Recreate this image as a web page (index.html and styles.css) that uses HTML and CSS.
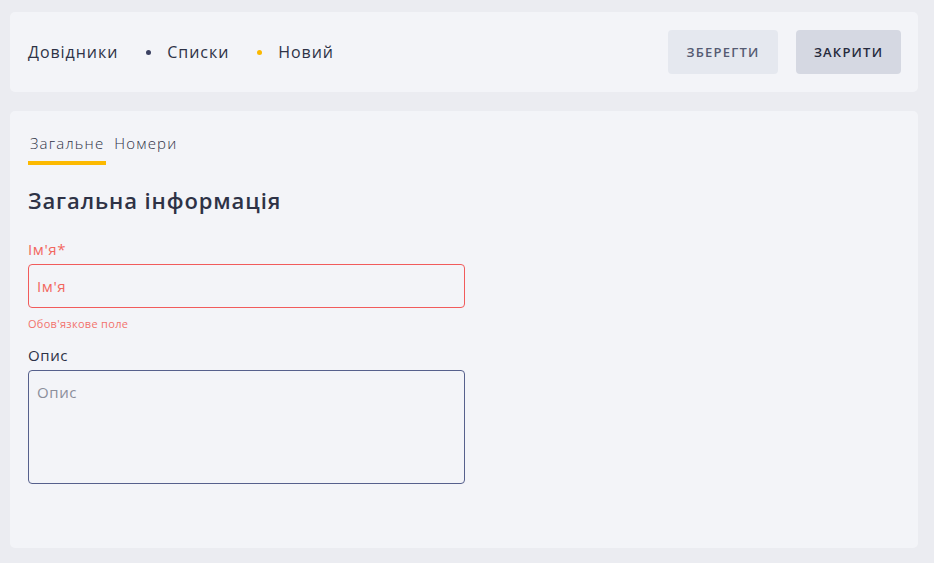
FILE: index.html
```html
<!DOCTYPE html>
<html lang="uk">
<head>
<meta charset="utf-8">
<title>Новий</title>
<link rel="stylesheet" href="styles.css">
</head>
<body>
<div class="page">
  <header class="topbar">
    <nav class="crumbs">
      <span class="crumb">Довідники</span>
      <span class="dot dot-dark"></span>
      <span class="crumb">Списки</span>
      <span class="dot dot-yellow"></span>
      <span class="crumb">Новий</span>
    </nav>
    <div class="actions">
      <button class="btn btn-save">ЗБЕРЕГТИ</button>
      <button class="btn btn-close">ЗАКРИТИ</button>
    </div>
  </header>
  <main class="card">
    <div class="tabs">
      <span class="tab active">Загальне</span>
      <span class="tab">Номери</span>
    </div>
    <h1 class="title">Загальна інформація</h1>
    <div class="field">
      <label class="label label-error">Ім'я*</label>
      <div class="input input-error"><span class="ph ph-error">Ім'я</span></div>
      <div class="error">Обов'язкове поле</div>
    </div>
    <div class="field">
      <label class="label">Опис</label>
      <div class="textarea"><span class="ph">Опис</span></div>
    </div>
  </main>
</div>
</body>
</html>
```
FILE: styles.css
```css
* { box-sizing: border-box; }
html, body { margin: 0; padding: 0; }
body {
  background: #ebecf1;
  font-family: "Open Sans", "DejaVu Sans", sans-serif;
  color: #2e3246;
  width: 934px;
  height: 563px;
  overflow: hidden;
}
.page {
  padding: 12px 16px 0 10px;
  display: flex;
  flex-direction: column;
  gap: 19px;
}
.topbar {
  background: #f3f4f8;
  border-radius: 5px;
  height: 80px;
  display: flex;
  align-items: center;
  justify-content: space-between;
  padding: 0 17px 0 18px;
}
.crumbs {
  display: flex;
  align-items: center;
  font-size: 16px;
  letter-spacing: 0.95px;
  color: #2e3246;
}
.dot {
  width: 5px;
  height: 5px;
  border-radius: 50%;
  margin: 0 16px 0 28px;
}
.dot-dark { background: #3b4162; }
.dot-yellow { background: #fbb800; }
.actions { display: flex; gap: 18px; }
.btn {
  height: 44px;
  border: none;
  border-radius: 4px;
  font-family: inherit;
  font-size: 13px;
  font-weight: 600;
  letter-spacing: 1.2px;
  padding: 0;
}
.btn-save { width: 110px; background: #e5e8ef; color: #555b72; }
.btn-close { width: 105px; background: #d5d8e2; color: #262a3c; }
.card {
  background: #f3f4f8;
  border-radius: 5px;
  height: 437px;
  padding: 22px 18px 0 18px;
}
.tabs {
  display: flex;
  gap: 6px;
  font-size: 15px;
  font-weight: 300;
  letter-spacing: 1.2px;
  color: #2e3246;
}
.tab { padding: 0 2px 8px 2px; border-bottom: 4px solid transparent; }
.tab.active { border-bottom-color: #fcb900; }
.title {
  margin: 20px 0 24px 0;
  font-size: 22px;
  font-weight: 600;
  letter-spacing: 0.9px;
  color: #2e3246;
}
.field { width: 437px; display: flex; flex-direction: column; }
.label { font-size: 15px; letter-spacing: 0.6px; color: #2e3246; margin-bottom: 5px; }
.label-error { color: #f2675f; }
.input {
  height: 44px;
  border: 1px solid #f15b5b;
  border-radius: 4px;
  padding: 0 8px;
  display: flex;
  align-items: center;
}
.ph { font-size: 15px; letter-spacing: 0.6px; color: #8b8e9b; }
.ph-error { color: #f2675f; }
.error {
  font-size: 11px;
  letter-spacing: 0.3px;
  color: #f2726c;
  margin: 8px 0 14px 0;
}
.textarea {
  height: 114px;
  border: 1px solid #56608c;
  border-radius: 4px;
  padding: 10px 8px;
}
```
